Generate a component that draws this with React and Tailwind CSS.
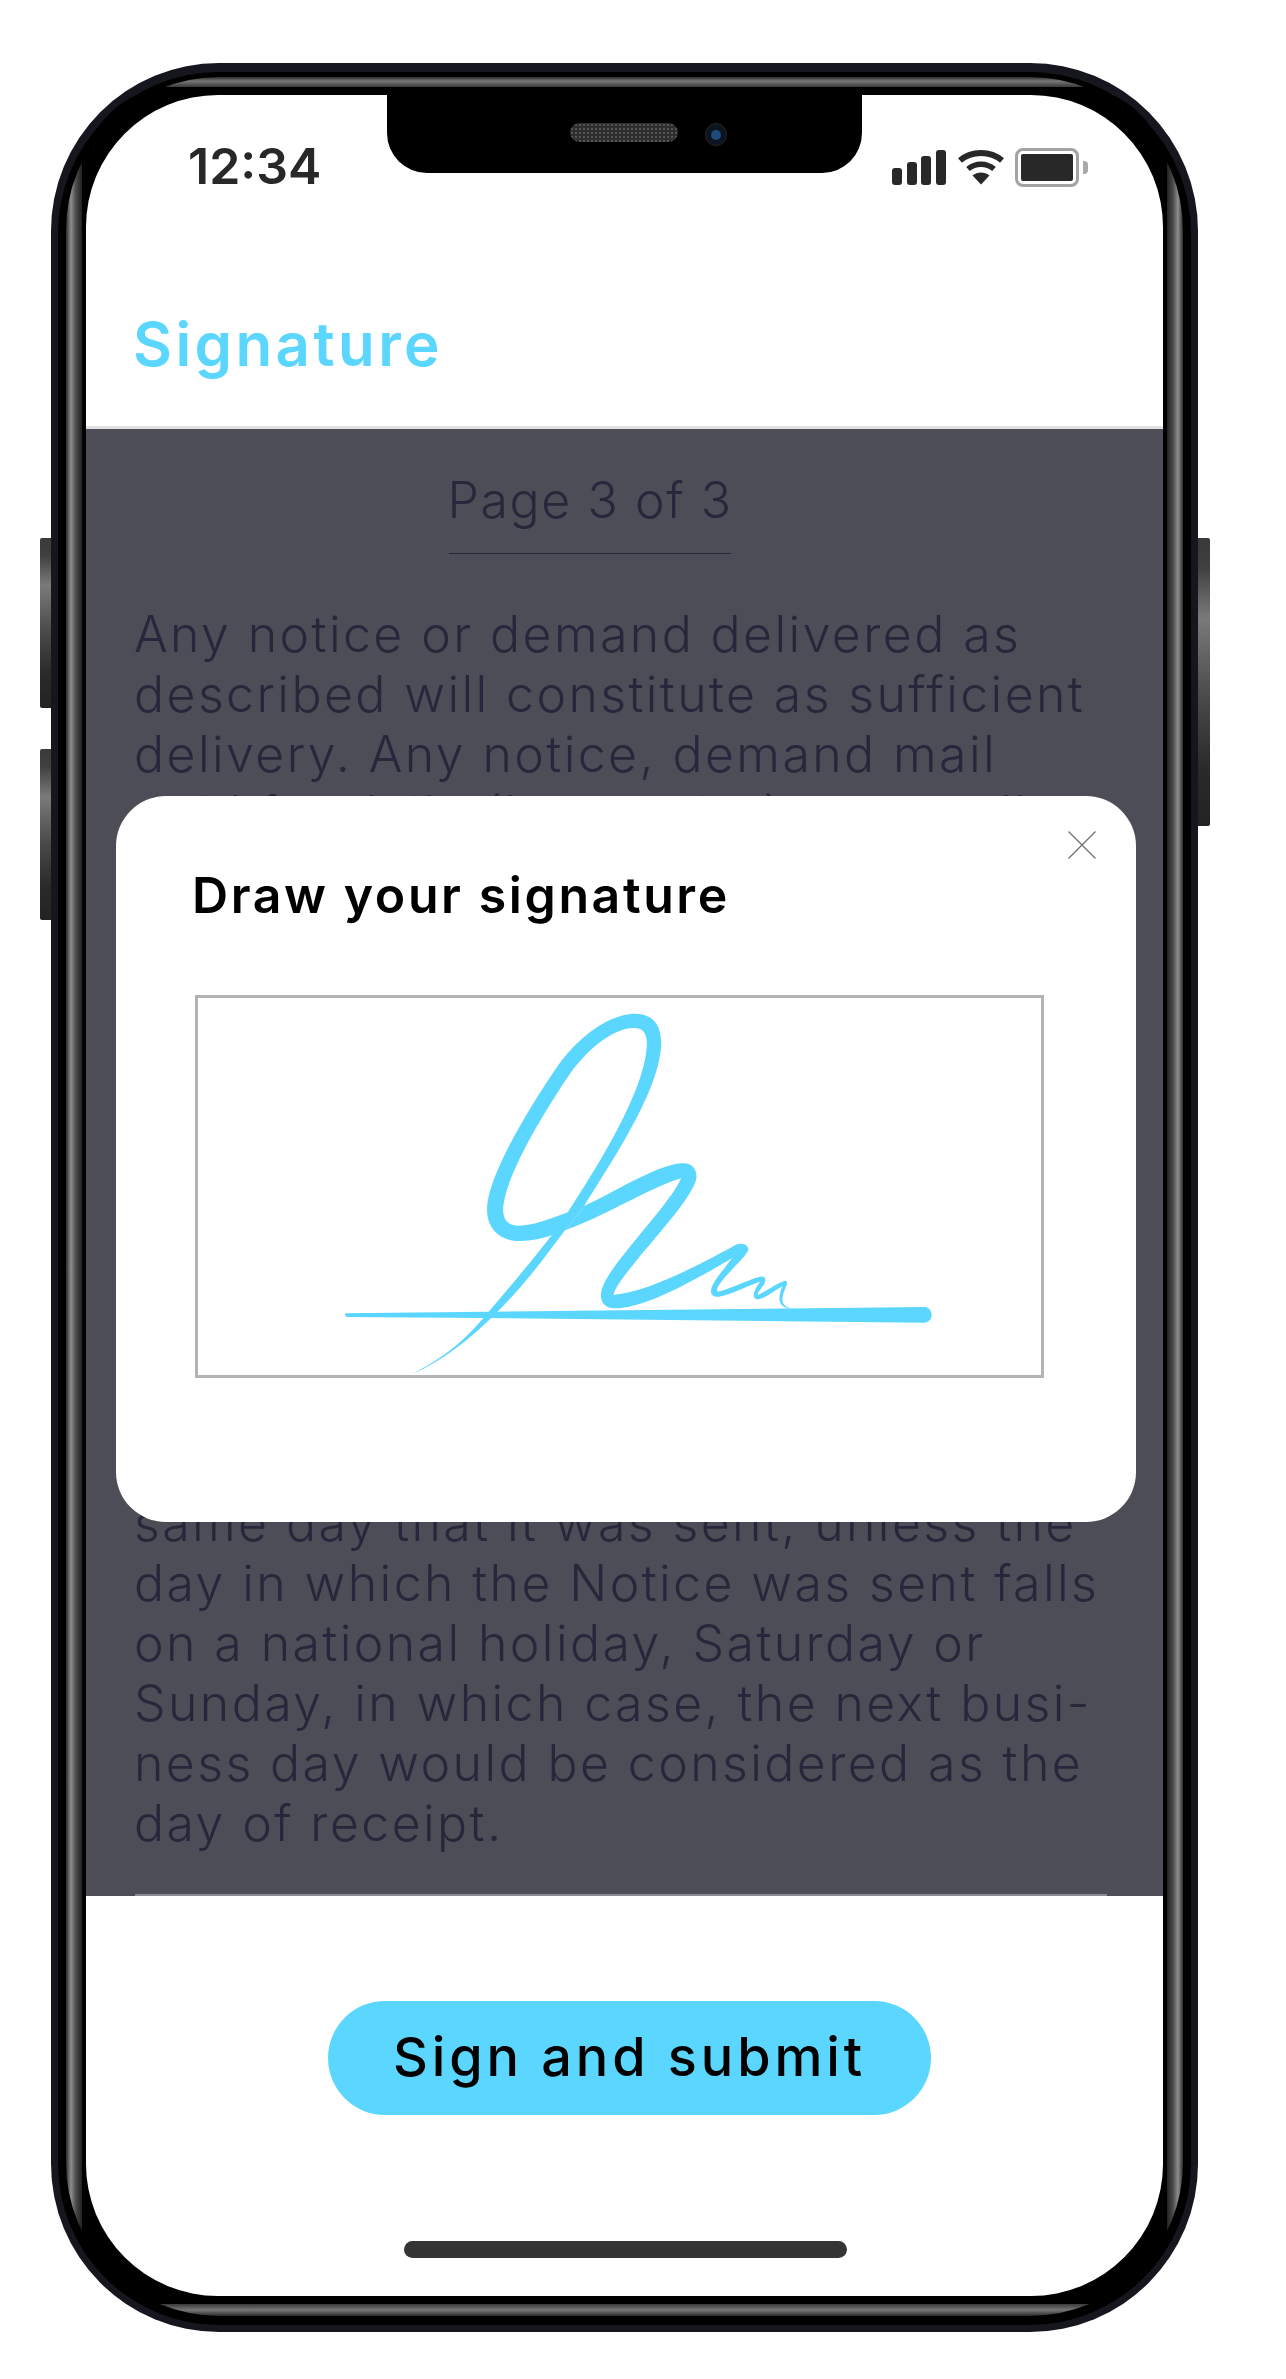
const firstPara = [
  "Any notice or demand delivered as",
  "described will constitute as sufficient",
  "delivery. Any notice, demand mail",
  "paid for daily (by courier) must call",
  "the recipient at the address given",
  "in this agreement and shall be",
  "deemed received on that date.",
];

const secondPara = [
  "Notice sent by electronic mail is",
  "deemed to have been delivered on",
  "the first business day following",
  "transmission, and a notice sent by",
  "hand is received by the person",
  "named in it and is effective on the",
  "following business day, or on the",
  "same day that it was sent, unless the",
  "day in which the Notice was sent falls",
  "on a national holiday, Saturday or",
  "Sunday, in which case, the next busi-",
  "ness day would be considered as the",
  "day of receipt.",
];

function SideButton({ className }) {
  return (
    <div
      className={`absolute w-[12px] bg-[linear-gradient(180deg,#3a3a38_0%,#3f3f3e_10%,#7a7a7a_28%,#4a4a48_55%,#2a2a28_80%,#232321_100%)] ${className}`}
    />
  );
}

function StatusIcons() {
  return (
    <div className="flex items-center pl-[30px] pt-[48px]">
      <div className="flex h-[35px] items-end gap-[4.5px]">
        <div className="h-[17px] w-[10px] rounded-[3px] bg-[#282828]" />
        <div className="h-[23px] w-[10px] rounded-[3px] bg-[#282828]" />
        <div className="h-[29px] w-[10px] rounded-[3px] bg-[#282828]" />
        <div className="h-[35px] w-[10px] rounded-[3px] bg-[#282828]" />
      </div>
      <svg className="ml-[11px]" width="48" height="36" viewBox="0 0 48 36" fill="none">
        <path d="M3 11.5C14.5 1.5 33.5 1.5 45 11.5" stroke="#282828" strokeWidth="6" />
        <path d="M11 20C18.5 13.5 29.5 13.5 37 20" stroke="#282828" strokeWidth="5.5" />
        <path d="M24 35.5L15.5 26.5C20.5 22.5 27.5 22.5 32.5 26.5Z" fill="#282828" />
      </svg>
      <div className="ml-[10px] flex h-[39px] w-[64px] rounded-[8px] border-[3px] border-[#a3a3a3] p-[3px]">
        <div className="flex-1 rounded-[2px] bg-[#282828]" />
      </div>
      <div className="ml-[4px] h-[13px] w-[5px] rounded-r-[4px] bg-[#a8a8a8]" />
    </div>
  );
}

function SignatureDrawing() {
  return (
    <svg
      className="h-full w-full"
      viewBox="-235 54 1942 1131"
      preserveAspectRatio="none"
      fill="#5ad6ff"
    >
      <path d="M258 1183C320 1140 370 1095 422 1015C480 925 530 850 580 765L612 748C560 840 510 925 455 995C390 1080 330 1140 258 1183Z" />
      <path
        fillRule="evenodd"
        d="M655 678C720 540 830 330 832 190C832 130 810 100 768 101C710 105 640 170 590 265C530 380 430 590 431 690C431 745 460 783 505 783C540 783 570 772 612 750ZM617 697C680 570 798 330 799 190C799 160 790 143 768 144C720 145 660 210 620 285C560 400 468 600 468 690C468 720 480 737 505 737C535 737 570 720 617 697Z"
      />
      <path d="M655 678C720 640 820 555 880 550C905 548 915 570 913 595C908 645 820 770 770 850C745 890 725 925 722 945C790 935 870 890 1000 797C1015 787 1030 790 1033 808C1032 830 950 915 962 935C985 930 1040 895 1060 890C1073 888 1075 900 1068 915C1060 930 1053 940 1055 945C1065 940 1100 908 1118 902C1124 903 1122 912 1119 922C1110 950 1104 975 1130 985C1100 983 1100 950 1112 918C1090 935 1065 960 1052 958C1040 955 1045 930 1060 905C1035 915 990 945 965 950C950 952 945 940 947 930C950 905 975 870 995 835C890 915 790 985 725 985C705 985 693 970 693 945C693 915 720 865 745 825C790 750 860 650 878 595C810 620 700 710 612 750Z" />
      <path d="M105 1000L1440 981C1450 982 1455 995 1455 1005C1455 1018 1448 1027 1438 1028L420 1014L108 1011C103 1008 103 1001 105 1000Z" />
    </svg>
  );
}

function SignatureModal() {
  return (
    <div className="absolute left-[30px] top-[701px] h-[726px] w-[1020px] rounded-[50px] bg-white">
      <svg className="absolute left-[952px] top-[35px]" width="28" height="28" viewBox="0 0 28 28" stroke="#6f6f6f" strokeWidth="1.2">
        <path d="M0.5 0.5L27.5 27.5M27.5 0.5L0.5 27.5" />
      </svg>
      <h2 className="ml-[76px] mt-0 pt-[69px] text-[50px] leading-[60px] font-semibold tracking-[2.6px] text-black">
        Draw your signature
      </h2>
      <div className="ml-[79px] mt-[70px] h-[383px] w-[849px] border-[3px] border-[#b3b3b3]">
        <SignatureDrawing />
      </div>
    </div>
  );
}

export default function App() {
  return (
    <div className="h-[2379px] w-[1286px] bg-white pl-[51px] pt-[63px] font-['Inter',sans-serif]">
      <div className="relative w-[1147px]">
        <SideButton className="left-[-11px] top-[475px] h-[170px] rounded-l-[2px]" />
        <SideButton className="left-[-11px] top-[686px] h-[171px] rounded-l-[2px]" />
        <SideButton className="left-[1147px] top-[475px] h-[288px] rounded-r-[2px]" />

        <div className="relative rounded-[168px] bg-[#16161e] px-[7px] pb-[7px] pt-[9px]">
          <div className="rounded-[161px] bg-black px-[8px] pb-[9px] pt-[5px]">
            <div className="rounded-[153px] bg-[linear-gradient(90deg,#2c2c2c_0px,#8e8e8e_5px,#4a4a4a_10px,#222222_16px,transparent_16px,transparent_calc(100%-16px),#222222_calc(100%-16px),#4a4a4a_calc(100%-10px),#8e8e8e_calc(100%-5px),#2c2c2c_100%),linear-gradient(180deg,#2a2a2a_0px,#777777_4px,#3a3a3a_10px,transparent_10px,transparent_calc(100%-12px),#3a3a3a_calc(100%-12px),#777777_calc(100%-6px),#2a2a2a_100%)] px-[16px] pb-[12px] pt-[10px]">
              <div className="rounded-[92px] bg-black px-[4px] py-[8px]">
                <div className="relative flex h-[2201px] flex-col overflow-hidden rounded-[132px] bg-white">
                  <header className="h-[334px] shrink-0 border-b-[3px] border-[#e0e0e0]">
                    <div className="grid grid-cols-[301px_475px_1fr]">
                      <div className="pl-[102px] pt-[46px] text-[50px] leading-[50px] font-semibold text-[#282828]">
                        12:34
                      </div>
                      <div className="flex h-[78px] items-start rounded-b-[40px] bg-black pl-[183px] pt-[28px]">
                        <div className="h-[19px] w-[108px] rounded-full bg-[#2e2e2e] bg-[radial-gradient(#555555_1px,transparent_1px)] bg-[size:4px_4px]" />
                        <div className="ml-[27px] flex h-[23px] w-[22px] items-center justify-center rounded-full border border-[#2a2226] bg-[#0c1420]">
                          <div className="h-[10px] w-[10px] rounded-full bg-[#1d4a7c]" />
                        </div>
                      </div>
                      <StatusIcons />
                    </div>
                    <h1 className="ml-[47px] mt-[118px] text-[60px] leading-[70px] font-semibold tracking-[3.4px] text-[#5ad6ff]">
                      Signature
                    </h1>
                  </header>

                  <main className="flex h-[1467px] shrink-0 flex-col justify-between overflow-hidden bg-[#4c4d57] text-[#26273a]">
                    <div className="font-light">
                      <div className="ml-[363px] mt-[41px] flex h-[84px] w-[282px] justify-center whitespace-nowrap border-b border-[#26273a] text-[50px] leading-[60px] tracking-[1.6px]">
                        Page 3 of 3
                      </div>
                      <div className="ml-[48px] mt-[50px] text-[50px] leading-[60px] tracking-[2.4px]">
                        {firstPara.map((line) => (
                          <div key={line} className="whitespace-nowrap">{line}</div>
                        ))}
                        <div className="mt-[49px]">
                          {secondPara.map((line) => (
                            <div key={line} className="whitespace-nowrap">{line}</div>
                          ))}
                        </div>
                      </div>
                    </div>
                    <div className="ml-[49px] h-[2px] w-[972px] bg-[#8a8a90]" />
                  </main>

                  <footer className="flex flex-1 flex-col">
                    <button className="ml-[242px] mt-[105px] h-[114px] w-[603px] rounded-full bg-[#5ad6ff] pb-[3px] text-[54px] font-medium tracking-[3.9px] text-black">
                      Sign and submit
                    </button>
                    <div className="ml-[318px] mt-[126px] h-[17px] w-[443px] rounded-full bg-[#353535]" />
                  </footer>

                  <SignatureModal />
                </div>
              </div>
            </div>
          </div>
        </div>
      </div>
    </div>
  );
}
